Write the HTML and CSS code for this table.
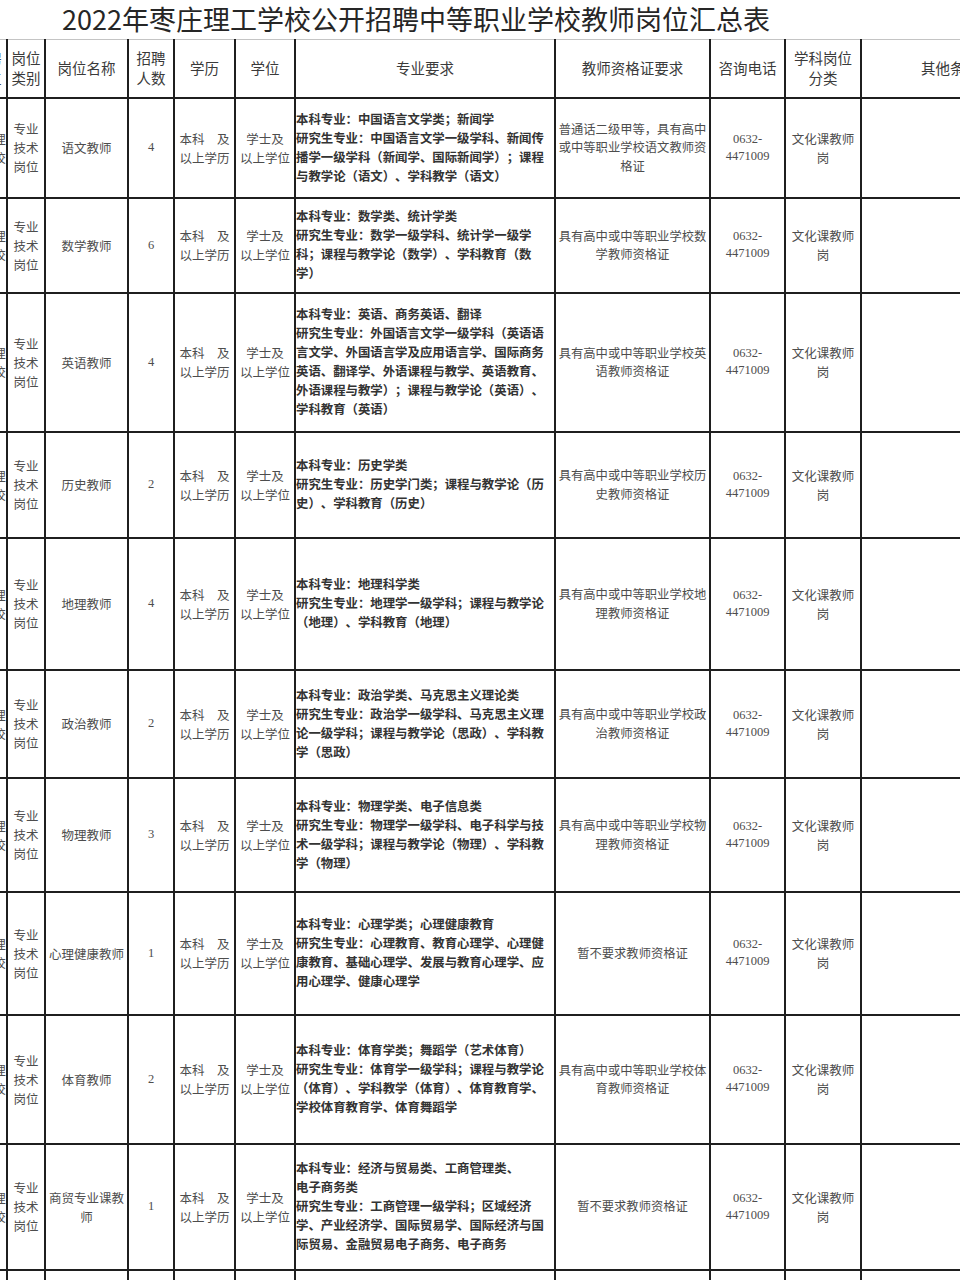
FILE: index.html
```html
<!DOCTYPE html>
<html lang="zh-CN">
<head>
<meta charset="utf-8">
<title>2022年枣庄理工学校公开招聘中等职业学校教师岗位汇总表</title>
<link rel="stylesheet" href="styles.css">
</head>
<body>
<div class="page">
<h1 class="title">2022年枣庄理工学校公开招聘中等职业学校教师岗位汇总表</h1>
<table class="grid">
<colgroup>
<col class="c0"><col class="c1"><col class="c2"><col class="c3"><col class="c4"><col class="c5"><col class="c6"><col class="c7"><col class="c8"><col class="c9"><col class="c10">
</colgroup>
<thead>
<tr class="rh">
<th>招聘<br>单位</th><th>岗位<br>类别</th><th>岗位名称</th><th>招聘<br>人数</th><th>学历</th><th>学位</th><th>专业要求</th><th>教师资格证要求</th><th>咨询电话</th><th>学科岗位<br>分类</th><th>其他条件</th>
</tr>
</thead>
<tbody>
<tr class="r1">
<td>枣庄理<br>工学校</td><td>专业<br>技术<br>岗位</td><td>语文教师</td><td class="num">4</td><td>本科　及<br>以上学历</td><td>学士及<br>以上学位</td>
<td class="spec">本科专业：中国语言文学类；新闻学<br>研究生专业：中国语言文学一级学科、新闻传<br>播学一级学科（新闻学、国际新闻学）；课程<br>与教学论（语文）、学科教学（语文）</td>
<td class="cert">普通话二级甲等，具有高中<br>或中等职业学校语文教师资<br>格证</td><td class="tel">0632-<br>4471009</td><td>文化课教师<br>岗</td><td></td>
</tr>
<tr class="r2">
<td>枣庄理<br>工学校</td><td>专业<br>技术<br>岗位</td><td>数学教师</td><td class="num">6</td><td>本科　及<br>以上学历</td><td>学士及<br>以上学位</td>
<td class="spec">本科专业：数学类、统计学类<br>研究生专业：数学一级学科、统计学一级学<br>科；课程与教学论（数学）、学科教育（数<br>学）</td>
<td class="cert">具有高中或中等职业学校数<br>学教师资格证</td><td class="tel">0632-<br>4471009</td><td>文化课教师<br>岗</td><td></td>
</tr>
<tr class="r3">
<td>枣庄理<br>工学校</td><td>专业<br>技术<br>岗位</td><td>英语教师</td><td class="num">4</td><td>本科　及<br>以上学历</td><td>学士及<br>以上学位</td>
<td class="spec">本科专业：英语、商务英语、翻译<br>研究生专业：外国语言文学一级学科（英语语<br>言文学、外国语言学及应用语言学、国际商务<br>英语、翻译学、外语课程与教学、英语教育、<br>外语课程与教学）；课程与教学论（英语）、<br>学科教育（英语）</td>
<td class="cert">具有高中或中等职业学校英<br>语教师资格证</td><td class="tel">0632-<br>4471009</td><td>文化课教师<br>岗</td><td></td>
</tr>
<tr class="r4">
<td>枣庄理<br>工学校</td><td>专业<br>技术<br>岗位</td><td>历史教师</td><td class="num">2</td><td>本科　及<br>以上学历</td><td>学士及<br>以上学位</td>
<td class="spec">本科专业：历史学类<br>研究生专业：历史学门类；课程与教学论（历<br>史）、学科教育（历史）</td>
<td class="cert">具有高中或中等职业学校历<br>史教师资格证</td><td class="tel">0632-<br>4471009</td><td>文化课教师<br>岗</td><td></td>
</tr>
<tr class="r5">
<td>枣庄理<br>工学校</td><td>专业<br>技术<br>岗位</td><td>地理教师</td><td class="num">4</td><td>本科　及<br>以上学历</td><td>学士及<br>以上学位</td>
<td class="spec">本科专业：地理科学类<br>研究生专业：地理学一级学科；课程与教学论<br>（地理）、学科教育（地理）</td>
<td class="cert">具有高中或中等职业学校地<br>理教师资格证</td><td class="tel">0632-<br>4471009</td><td>文化课教师<br>岗</td><td></td>
</tr>
<tr class="r6">
<td>枣庄理<br>工学校</td><td>专业<br>技术<br>岗位</td><td>政治教师</td><td class="num">2</td><td>本科　及<br>以上学历</td><td>学士及<br>以上学位</td>
<td class="spec">本科专业：政治学类、马克思主义理论类<br>研究生专业：政治学一级学科、马克思主义理<br>论一级学科；课程与教学论（思政）、学科教<br>学（思政）</td>
<td class="cert">具有高中或中等职业学校政<br>治教师资格证</td><td class="tel">0632-<br>4471009</td><td>文化课教师<br>岗</td><td></td>
</tr>
<tr class="r7">
<td>枣庄理<br>工学校</td><td>专业<br>技术<br>岗位</td><td>物理教师</td><td class="num">3</td><td>本科　及<br>以上学历</td><td>学士及<br>以上学位</td>
<td class="spec">本科专业：物理学类、电子信息类<br>研究生专业：物理学一级学科、电子科学与技<br>术一级学科；课程与教学论（物理）、学科教<br>学（物理）</td>
<td class="cert">具有高中或中等职业学校物<br>理教师资格证</td><td class="tel">0632-<br>4471009</td><td>文化课教师<br>岗</td><td></td>
</tr>
<tr class="r8">
<td>枣庄理<br>工学校</td><td>专业<br>技术<br>岗位</td><td>心理健康教师</td><td class="num">1</td><td>本科　及<br>以上学历</td><td>学士及<br>以上学位</td>
<td class="spec">本科专业：心理学类；心理健康教育<br>研究生专业：心理教育、教育心理学、心理健<br>康教育、基础心理学、发展与教育心理学、应<br>用心理学、健康心理学</td>
<td class="cert">暂不要求教师资格证</td><td class="tel">0632-<br>4471009</td><td>文化课教师<br>岗</td><td></td>
</tr>
<tr class="r9">
<td>枣庄理<br>工学校</td><td>专业<br>技术<br>岗位</td><td>体育教师</td><td class="num">2</td><td>本科　及<br>以上学历</td><td>学士及<br>以上学位</td>
<td class="spec">本科专业：体育学类；舞蹈学（艺术体育）<br>研究生专业：体育学一级学科；课程与教学论<br>（体育）、学科教学（体育）、体育教育学、<br>学校体育教育学、体育舞蹈学</td>
<td class="cert">具有高中或中等职业学校体<br>育教师资格证</td><td class="tel">0632-<br>4471009</td><td>文化课教师<br>岗</td><td></td>
</tr>
<tr class="r10">
<td>枣庄理<br>工学校</td><td>专业<br>技术<br>岗位</td><td>商贸专业课教<br>师</td><td class="num">1</td><td>本科　及<br>以上学历</td><td>学士及<br>以上学位</td>
<td class="spec">本科专业：经济与贸易类、工商管理类、<br>电子商务类<br>研究生专业：工商管理一级学科；区域经济<br>学、产业经济学、国际贸易学、国际经济与国<br>际贸易、金融贸易电子商务、电子商务</td>
<td class="cert">暂不要求教师资格证</td><td class="tel">0632-<br>4471009</td><td>文化课教师<br>岗</td><td></td>
</tr>
<tr class="r11">
<td></td><td></td><td></td><td></td><td></td><td></td><td></td><td></td><td></td><td></td><td></td>
</tr>
</tbody>
</table>
</div>
</body>
</html>
```

FILE: styles.css
```css
html, body {
  margin: 0;
  padding: 0;
  background: #ffffff;
}

body {
  width: 960px;
  height: 1280px;
  overflow: hidden;
  font-family: "Noto Sans CJK SC", "Noto Sans", sans-serif;
  color: #4d4d4d;
  text-spacing-trim: space-all;
}

.page {
  width: 960px;
  overflow: hidden;
}

.title {
  margin: 0;
  height: 39px;
  line-height: 38px;
  padding-left: 62px;
  font-size: 27px;
  font-weight: 400;
  color: #262626;
  white-space: nowrap;
}

.grid {
  border-collapse: collapse;
  table-layout: fixed;
  width: 1072px;
  margin-left: -34px;
}

.c0 { width: 40px; }
.c1 { width: 38px; }
.c2 { width: 83px; }
.c3 { width: 46px; }
.c4 { width: 61px; }
.c5 { width: 60px; }
.c6 { width: 260px; }
.c7 { width: 155px; }
.c8 { width: 75px; }
.c9 { width: 76px; }
.c10 { width: 178px; }

.grid th,
.grid td {
  border: 2px solid #1f1f1f;
  padding: 0;
  text-align: center;
  vertical-align: middle;
  white-space: nowrap;
  overflow: hidden;
  font-size: 12.5px;
  line-height: 19px;
}

.grid thead th {
  border-top: 1px solid #c4c4c4;
  font-weight: 400;
  font-size: 14.5px;
  line-height: 20px;
  color: #3a3a3a;
}

.rh { height: 58px; }
.r1 { height: 100px; }
.r2 { height: 95px; }
.r3 { height: 139px; }
.r4 { height: 106px; }
.r5 { height: 132px; }
.r6 { height: 108px; }
.r7 { height: 114px; }
.r8 { height: 123px; }
.r9 { height: 129px; }
.r10 { height: 126px; }
.r11 { height: 60px; }

.grid td.spec {
  text-align: left;
  padding-left: 0;
  font-size: 12.4px;
  line-height: 19px;
  font-weight: 700;
  color: #333333;
}

.grid td.cert {
  font-size: 12.3px;
  line-height: 18.5px;
}

.grid td.num,
.grid td.tel {
  font-family: "Liberation Serif", "DejaVu Serif", serif;
}

.grid td.tel {
  line-height: 17px;
  font-size: 12.5px;
}
```
